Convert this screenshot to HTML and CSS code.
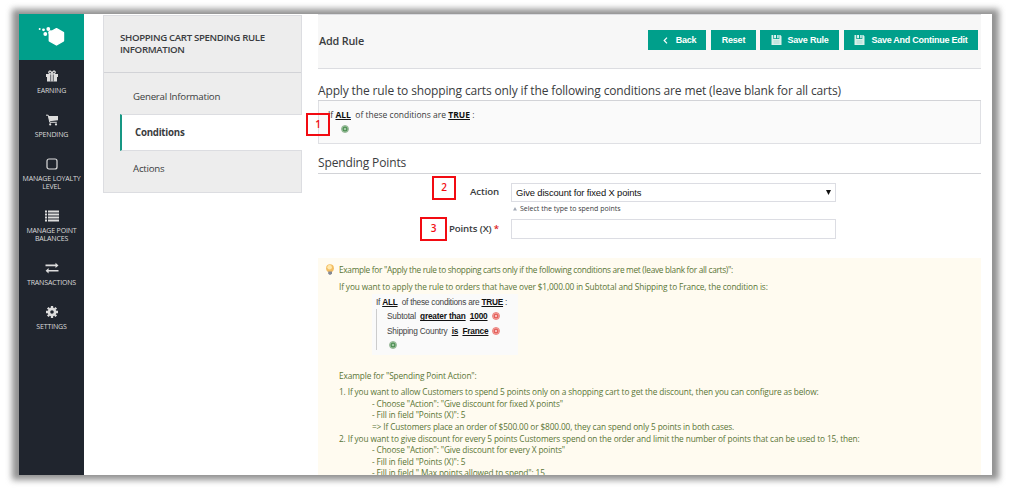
FILE: index.html
```html
<!DOCTYPE html>
<html lang="en">
<head>
<meta charset="utf-8">
<title>Add Rule</title>
<link rel="stylesheet" href="styles.css">
</head>
<body>
<svg width="0" height="0" class="defs">
  <defs>
    <symbol id="add" viewBox="0 0 8 8"><circle cx="4" cy="4" r="3.500" fill="#a9cbaa" stroke="#8aac8c" stroke-width=".8"/><circle cx="4" cy="4" r="2.500" fill="#4d8f53"/><path d="M4 2.800v2.400M2.800 4h2.400" stroke="#e4f2e4" stroke-width=".7"/></symbol>
    <symbol id="remove" viewBox="0 0 8 8"><circle cx="4" cy="4" r="3.500" fill="#f9b9b4" stroke="#e8706b" stroke-width=".8"/><circle cx="4" cy="4" r="2.500" fill="#e4625d"/><path d="M3 3l2 2M5 3L3 5" stroke="#fff" stroke-width=".6"/></symbol>
    <symbol id="disk" viewBox="0 0 11 10"><path d="M.5 0h1.800v4h6V0h1l1.200 1.200V10H.5z" fill="#d9f0ea"/><path d="M3.200 0h1.700v3.200H3.200zM6.300 0h1.300v3.200H6.300z" fill="#fff"/><path d="M2.500 6h6M2.500 8h6" stroke="#8ccfc3" stroke-width=".6"/></symbol>
  </defs>
</svg>
<div class="window">
  <nav class="rail">
    <a class="brand"><svg width="27" height="20" viewBox="0 0 27 20"><path d="M18.500 1.700l7 4v8.100l-7 4.200-7.200-4.200V5.700z" fill="#fff" stroke="#fff" stroke-width="1.400" stroke-linejoin="round"/><g fill="#fff"><circle cx="1.700" cy="2" r="1"/><circle cx="5.500" cy="2.800" r="1.400"/><circle cx="10.300" cy="2" r="1.900"/><circle cx="7.300" cy="7" r="1.900"/><circle cx="12.500" cy="5.500" r="2.200"/></g></svg></a>
    <a class="item"><svg width="12" height="12" viewBox="0 0 12 12"><path d="M0 4h12v3H0zM1 7h10v4.500H1z" fill="#ddd"/><path d="M5.800 4C4 4 2.300 3.400 2.800 1.900 3.500.3 5.200 1 6 3.400 6.800 1 8.500.3 9.200 1.900 9.700 3.400 8 4 6.200 4" fill="none" stroke="#ddd" stroke-width="1.200"/><path d="M4.700 4.500v7M7.300 4.500v7" stroke="#252a33" stroke-width=".7"/></svg><span>EARNING</span></a>
    <a class="item"><svg width="12" height="12" viewBox="0 0 12 12"><path d="M0 1.200h2.200l1.600 7.100h7" fill="none" stroke="#ddd" stroke-width="1"/><path d="M2.500 2H12v4.200L3.500 7.300z" fill="#ddd"/><circle cx="4.200" cy="10.400" r="1.100" fill="#ddd"/><circle cx="10" cy="10.400" r="1.100" fill="#ddd"/></svg><span>SPENDING</span></a>
    <a class="item tall"><svg width="12" height="12" viewBox="0 0 12 12"><rect x="1" y="1" width="10" height="10" rx="2" fill="none" stroke="#ddd" stroke-width="1.200"/></svg><span>MANAGE LOYALTY<br>LEVEL</span></a>
    <a class="item tall"><svg width="14" height="12" viewBox="0 0 14 12"><path d="M0 1.500h2M0 4.500h2M0 7.500h2M0 10.500h2M3 1.500h11M3 4.500h11M3 7.500h11M3 10.500h11" stroke="#ddd" stroke-width="2"/></svg><span>MANAGE POINT<br>BALANCES</span></a>
    <a class="item"><svg width="14" height="12" viewBox="0 0 14 12"><path d="M.5 3.400h11M3 8.700h10.500" stroke="#ddd" stroke-width="1.600"/><path d="M10.500 .7l3 2.700-3 2.600zM3.600 6L.6 8.700l3 2.700z" fill="#ddd"/></svg><span>TRANSACTIONS</span></a>
    <a class="item"><svg width="12" height="12" viewBox="0 0 12 12"><circle cx="6" cy="6" r="3.100" fill="none" stroke="#ddd" stroke-width="2.600"/><path d="M6 0v2M6 10v2M0 6h2M10 6h2M1.800 1.800l1.400 1.400M8.800 8.800l1.400 1.400M10.200 1.800L8.800 3.200M3.200 8.800l-1.400 1.400" stroke="#ddd" stroke-width="2.300"/></svg><span>SETTINGS</span></a>
  </nav>
  <aside class="tabs">
    <h3>SHOPPING CART SPENDING RULE INFORMATION</h3>
    <ul>
      <li>General Information</li>
      <li class="active">Conditions</li>
      <li>Actions</li>
    </ul>
  </aside>
  <main class="main">
    <header class="toolbar">
      <h2>Add Rule</h2>
      <div class="buttons">
        <a class="btn back"><svg width="5" height="7" viewBox="0 0 5 7"><path d="M4 .7L1.200 3.500 4 6.300" fill="none" stroke="#fff" stroke-width="1.200"/></svg>Back</a>
        <a class="btn reset">Reset</a>
        <a class="btn save"><svg width="11" height="10"><use href="#disk"/></svg>Save Rule</a>
        <a class="btn cont"><svg width="11" height="10"><use href="#disk"/></svg>Save And Continue Edit</a>
      </div>
    </header>
    <h4 class="legend first">Apply the rule to shopping carts only if the following conditions are met (leave blank for all carts)</h4>
    <section class="conditions">
      <p>If <b>ALL</b>&nbsp; of these conditions are <b>TRUE</b> :</p>
      <svg class="plus" width="8" height="8"><use href="#add"/></svg>
      <span class="mark m1">1</span>
    </section>
    <h4 class="legend second">Spending Points</h4>
    <div class="form">
      <div class="row">
        <span class="mark m2">2</span>
        <label>Action</label>
        <div class="select">Give discount for fixed X points<svg width="5" height="5" viewBox="0 0 5 5"><path d="M0 0h5L2.500 5z" fill="#111"/></svg></div>
      </div>
      <p class="hint"><svg width="4" height="4" viewBox="0 0 4 4"><path d="M2 0l2 3.500H0z" fill="#a2a9b5"/></svg>Select the type to spend points</p>
      <div class="row">
        <span class="mark m3">3</span>
        <label>Points (X) <em>*</em></label>
        <div class="input"></div>
      </div>
    </div>
    <section class="note">
      <svg class="bulb" width="10" height="11" viewBox="0 0 10 11"><circle cx="5" cy="4.200" r="3.900" fill="#f3bd62"/><circle cx="4.600" cy="3.200" r="2.300" fill="#ffe9ad"/><path d="M3.200 7.500h3.800v2L5.800 10.800H4.200L3.200 9.600z" fill="#858994"/></svg>
      <p class="n1">Example for "Apply the rule to shopping carts only if the following conditions are met (leave blank for all carts)":</p>
      <p class="n2">If you want to apply the rule to orders that have over $1,000.00 in Subtotal and Shipping to France, the condition is:</p>
      <div class="sample">
        <p>If <b>ALL</b> &nbsp;of these conditions are <b>TRUE</b> :</p>
        <div class="tree">
          <p>Subtotal&nbsp; <b>greater than</b>&nbsp; <b>1000</b><svg width="8" height="8"><use href="#remove"/></svg></p>
          <p>Shipping Country&nbsp; <b>is</b>&nbsp; <b>France</b><svg width="8" height="8"><use href="#remove"/></svg></p>
          <p><svg class="only" width="8" height="8"><use href="#add"/></svg></p>
        </div>
      </div>
      <p class="n3">Example for "Spending Point Action":</p>
      <p class="n4">1. If you want to allow Customers to spend 5 points only on a shopping cart to get the discount, then you can configure as below:</p>
      <p class="sub">- Choose "Action": "Give discount for fixed X points"</p>
      <p class="sub">- Fill in field "Points (X)": 5</p>
      <p class="sub">=&gt; If Customers place an order of $500.00 or $800.00, they can spend only 5 points in both cases.</p>
      <p class="n5">2. If you want to give discount for every 5 points Customers spend on the order and limit the number of points that can be used to 15, then:</p>
      <p class="sub">- Choose "Action": "Give discount for every X points"</p>
      <p class="sub">- Fill in field "Points (X)": 5</p>
      <p class="sub">- Fill in field " Max points allowed to spend": 15</p>
    </section>
  </main>
</div>
</body>
</html>
```

FILE: styles.css
```css
* { box-sizing: border-box; }
body { margin: 0; height: 489px; padding: 14px 19px; background: #fff; overflow: hidden; font-family: "Open Sans", sans-serif; color: #3a3c40; }
h2, h3, h4, p, ul { margin: 0; padding: 0; }
.defs { position: absolute; }
.window { position: relative; width: 973px; height: 461px; display: flex; }
.window::before { content: ""; position: absolute; inset: -5px -7px -5px -7px; background: #929292; filter: blur(3px); z-index: -2; }
.window::after { content: ""; position: absolute; inset: 0; background: #fff; z-index: -1; }

.rail { width: 65px; background: #20252e; flex: none; }
.brand { display: flex; height: 46px; background: #009f8b; justify-content: center; padding: 13px 0 0 0; margin-bottom: 10px; }
.item { display: flex; flex-direction: column; align-items: center; height: 44px; gap: 5px; font-size: 7px; line-height: 8px; letter-spacing: -.15px; text-align: center; color: #dcdcdc; white-space: nowrap; }
.item.tall { height: 52px; }

.tabs { width: 199px; height: 178px; margin: 1px 0 0 19px; flex: none; background: #ededed; border: 1px solid #dcdde1; }
.tabs h3 { height: 57px; padding: 16px 10px 0 16px; border-bottom: 1px solid #d2d3d7; font-size: 9.700px; letter-spacing: -.36px; line-height: 12px; font-weight: 600; }
.tabs ul { list-style: none; padding: 5px 0 0 16px; }
.tabs li { height: 36px; padding-left: 13px; font-size: 9.700px; letter-spacing: -.25px; line-height: 38px; margin-right: -1px; }
.tabs li:last-child { line-height: 35px; }
.tabs .active { background: #fff; border: solid #dcdde1; border-width: 1px 0; border-left: 2px solid #179783; font-weight: 700; line-height: 35px; height: 37px; }

.main { margin-left: 16px; width: 663px; height: 461px; display: flex; flex-direction: column; }
.toolbar { height: 55px; flex: none; display: flex; justify-content: space-between; background: #f7f7f7; border: solid #dcdde1; border-width: 1px 0; padding: 15px 3px 0 1px; }
.toolbar h2 { font-size: 10.800px; letter-spacing: -.18px; line-height: 22px; font-weight: 600; }
.buttons { display: flex; gap: 5px; }
.btn { height: 20px; display: flex; align-items: center; justify-content: center; color: #fff; background: #009f8b; font: 700 9px/20px "Liberation Sans", sans-serif; letter-spacing: -.25px; white-space: nowrap; }
.back { width: 58px; gap: 8px; padding-left: 5px; }
.reset { width: 45px; }
.save { width: 79px; gap: 6px; margin-left: -1px; }
.cont { width: 134px; gap: 6px; }
.legend { font-weight: 400; font-size: 12px; letter-spacing: -.14px; border-bottom: 1px solid #d2d3d7; white-space: nowrap; flex: none; }
.first { height: 32px; line-height: 43px; }
.conditions { position: relative; height: 43px; flex: none; background: #fafafa; border: 1px solid #dfe0e4; border-top: 0; padding: 7px 0 0 9px; font-size: 8.500px; line-height: 13px; }
.conditions b { color: #111; text-decoration: underline; font-weight: 700; }
.plus { display: block; margin: 4px 0 0 13px; }
.second { height: 30px; line-height: 38px; }
.mark { width: 24px; height: 23px; border: 2px solid #f20b12; color: #f20b12; font: 600 10px/18px "Open Sans", sans-serif; text-align: center; }
.m1 { position: absolute; left: -13px; top: 12px; }
.form { height: 84px; flex: none; padding-top: 5px; }
.row { display: flex; align-items: flex-start; height: 24px; }
.m2 { margin: -3px 0 0 114px; height: 24px; }
.m3 { margin: 2px 0 0 102px; width: 27px; height: 24px; }
.row label { font-size: 9.700px; letter-spacing: -.15px; font-weight: 600; line-height: 25px; white-space: nowrap; text-align: right; width: 43px; margin-right: 12px; }
.row .m3 + label { width: 52px; line-height: 27px; }
.row em { color: #d22; font-style: normal; }
.select, .input { width: 325px; height: 20px; margin-top: 4px; border: 1px solid #dcdde3; background: #fff; }
.select { display: flex; justify-content: space-between; align-items: center; padding: 0 4px; font: 9.400px "Liberation Sans", sans-serif; letter-spacing: -.12px; color: #111; height: 19px; }
.hint { font-size: 7px; line-height: 10px; height: 12px; padding-left: 195px; display: flex; align-items: center; gap: 3px; }
.note { position: relative; height: 217px; flex: none; overflow: hidden; background: #fffbf0; color: #5a7536; padding: 6px 0 0 21px; font-size: 8.300px; letter-spacing: -.13px; line-height: 11.600px; white-space: nowrap; }
.bulb { position: absolute; left: 7px; top: 6px; }
.n1 { letter-spacing: -.3px; }
.n2 { margin-top: 5px; }
.sample { width: 146px; height: 61px; margin: 2px 0 0 33px; padding: 1px 0 0 4px; background: #fafafa; color: #444; font: 8.300px/14px "Liberation Sans", sans-serif; letter-spacing: -.25px; }
.sample b { color: #111; text-decoration: underline; }
.tree { border-left: 1px solid #ccc; padding-left: 10px; height: 41px; letter-spacing: -.2px; }
.tree p { display: flex; align-items: center; height: 14.300px; white-space: pre; }
.tree svg { margin-left: 4px; }
.tree .only { margin-left: 2px; }
.n3 { margin-top: 14.500px; }
.n4 { margin-top: 5px; }
.n5 { letter-spacing: -.125px; }
.sub { padding-left: 33px; }
```
